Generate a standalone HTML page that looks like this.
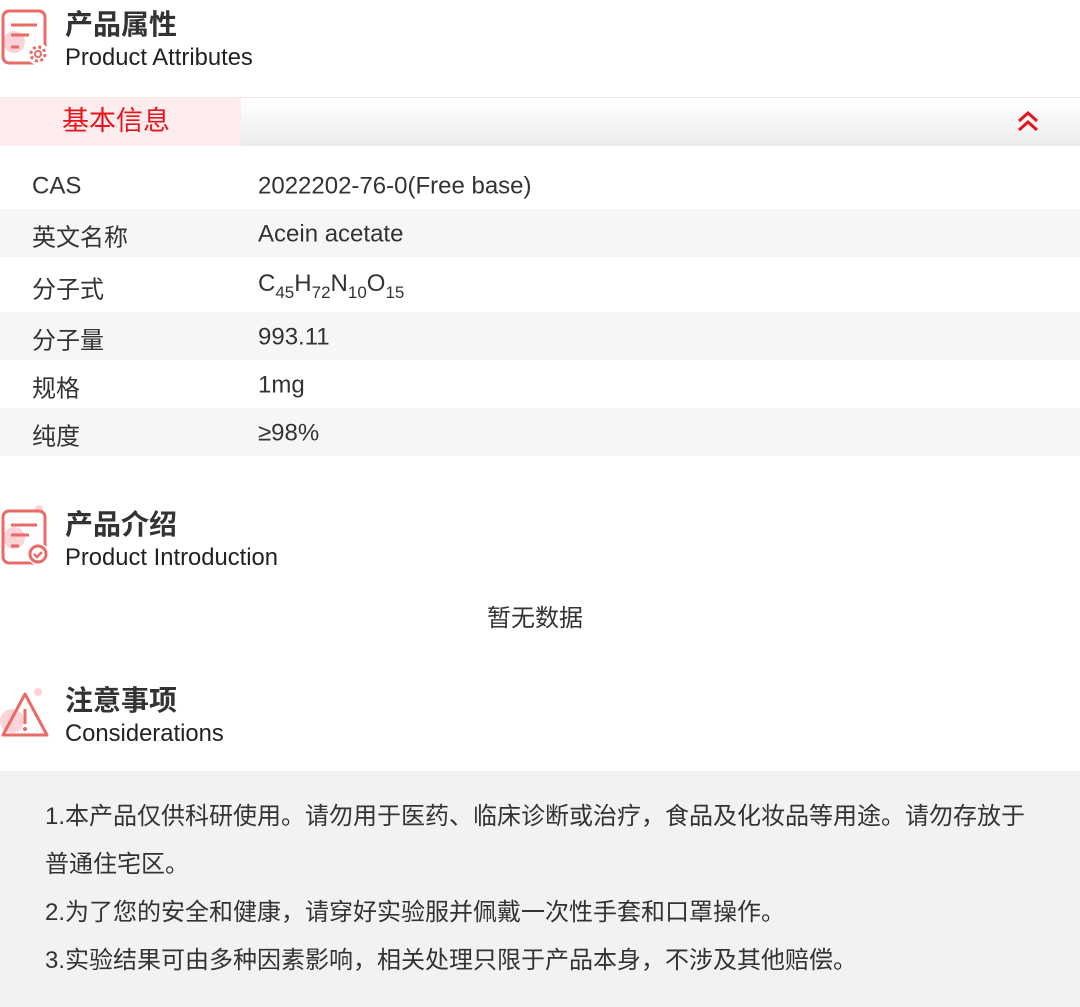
<!DOCTYPE html>
<html><head><meta charset="utf-8"><style>
*{margin:0;padding:0;box-sizing:border-box}
body{width:1080px;height:1007px;overflow:hidden;background:#fff;font-family:"Liberation Sans","Noto Sans CJK SC",sans-serif;color:#333;position:relative}
.abs{position:absolute}
.t1{font-size:28px;font-weight:bold;color:#333;left:65px;line-height:30px}
.t2{font-size:23.8px;color:#222;left:65px;line-height:26px}
.row{position:absolute;left:0;width:1080px;font-size:24px;color:#333}
.row span{position:absolute;top:50%;transform:translateY(-45%);white-space:nowrap}
.row .k{left:32px}.row .v{left:258px}
.g{background:#f6f6f6}
sub{font-size:17px;vertical-align:-7px}
</style></head><body>
<svg class="abs" style="left:0;top:8px" width="52" height="60" viewBox="0 0 52 60">
<circle cx="14" cy="34" r="11" fill="#fbd3d8"/>
<rect x="3" y="3" width="42" height="52" rx="6" fill="none" stroke="#ea6a66" stroke-width="3"/>
<path d="M11 17h26M11 27h18M11 39h8" stroke="#ea6a66" stroke-width="3"/>
<circle cx="38" cy="46" r="11" fill="#fff"/>
<circle cx="38" cy="46" r="7" fill="none" stroke="#ea6a66" stroke-width="3" stroke-dasharray="3 2.5"/>
<circle cx="38" cy="46" r="3" fill="none" stroke="#ea6a66" stroke-width="2"/>
</svg>
<div class="abs t1" style="top:10px">产品属性</div>
<div class="abs t2" style="top:45px">Product Attributes</div>
<div class="abs" style="left:0;top:97px;width:1080px;height:49px;border-top:1px solid #f0e4e2;background:linear-gradient(#fff,#ececec)"></div>
<div class="abs" style="left:0;top:98px;width:241px;height:48px;background:#fdeced"></div>
<div class="abs" style="left:62px;top:104px;font-size:27px;color:#e8141c;line-height:34px">基本信息</div>
<svg class="abs" style="left:1016px;top:110px" width="24" height="24" viewBox="0 0 24 24"><path d="M3 11l9-8 9 8M3 20l9-8 9 8" fill="none" stroke="#e8141c" stroke-width="3"/></svg>
<div class="row" style="top:161px;height:48px"><span class="k">CAS</span><span class="v">2022202-76-0(Free base)</span></div>
<div class="row g" style="top:209px;height:48px"><span class="k">英文名称</span><span class="v">Acein acetate</span></div>
<div class="row" style="top:257px;height:55px"><span class="k">分子式</span><span class="v">C<sub>45</sub>H<sub>72</sub>N<sub>10</sub>O<sub>15</sub></span></div>
<div class="row g" style="top:312px;height:48px"><span class="k">分子量</span><span class="v">993.11</span></div>
<div class="row" style="top:360px;height:48px"><span class="k">规格</span><span class="v">1mg</span></div>
<div class="row g" style="top:408px;height:48px"><span class="k">纯度</span><span class="v">≥98%</span></div>
<svg class="abs" style="left:0;top:504px" width="52" height="62" viewBox="0 0 52 62">
<circle cx="39" cy="5" r="4" fill="#fbd3d8"/>
<circle cx="14" cy="34" r="11" fill="#fbd3d8"/>
<rect x="3" y="7" width="42" height="52" rx="6" fill="none" stroke="#ea6a66" stroke-width="3"/>
<path d="M11 21h26M11 31h18M11 42h8" stroke="#ea6a66" stroke-width="3"/>
<circle cx="38" cy="50" r="11" fill="#fff"/>
<circle cx="38" cy="50" r="8" fill="none" stroke="#ea6a66" stroke-width="3"/>
<path d="M34 50l3 3 5-5" fill="none" stroke="#ea6a66" stroke-width="2.5"/>
</svg>
<div class="abs t1" style="top:510px">产品介绍</div>
<div class="abs t2" style="top:545px">Product Introduction</div>
<div class="abs" style="left:0;width:1070px;top:598px;text-align:center;font-size:24px;color:#333">暂无数据</div>
<svg class="abs" style="left:0;top:685px" width="52" height="56" viewBox="0 0 52 56">
<circle cx="38" cy="7" r="4" fill="#fbd3d8"/>
<circle cx="12" cy="36" r="12" fill="#fbd3d8"/>
<path d="M25 9L3 50h44z" fill="none" stroke="#ea6a66" stroke-width="3" stroke-linejoin="round"/>
<path d="M25 24v15" stroke="#ea6a66" stroke-width="3"/><circle cx="25" cy="44" r="2" fill="#ea6a66"/>
</svg>
<div class="abs t1" style="top:686px">注意事项</div>
<div class="abs t2" style="top:721px">Considerations</div>
<div class="abs" style="left:0;top:771px;width:1080px;height:236px;background:#f2f2f2;padding:22px 45px;font-size:24px;line-height:48px;color:#333">
<div style="white-space:nowrap">1.本产品仅供科研使用。请勿用于医药、临床诊断或治疗，食品及化妆品等用途。请勿存放于<br>普通住宅区。</div>
<div>2.为了您的安全和健康，请穿好实验服并佩戴一次性手套和口罩操作。</div>
<div>3.实验结果可由多种因素影响，相关处理只限于产品本身，不涉及其他赔偿。</div>
</div>
</body></html>
